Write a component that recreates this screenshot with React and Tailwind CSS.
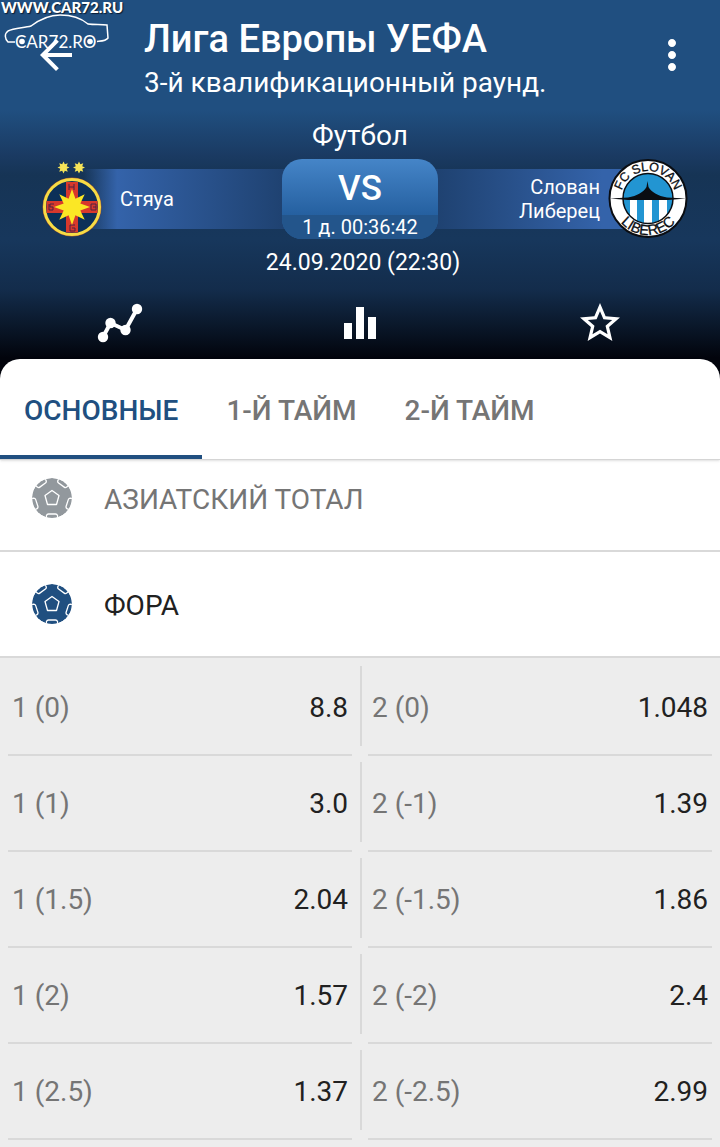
import React, { useState } from 'react'
import { MdArrowBack, MdMoreVert, MdEqualizer, MdStarBorder } from 'react-icons/md';

const tabs = ["ОСНОВНЫЕ", "1-Й ТАЙМ", "2-Й ТАЙМ"];

const odds = [
    [["1 (0)", "8.8"], ["2 (0)", "1.048"]],
    [["1 (1)", "3.0"], ["2 (-1)", "1.39"]],
    [["1 (1.5)", "2.04"], ["2 (-1.5)", "1.86"]],
    [["1 (2)", "1.57"], ["2 (-2)", "2.4"]],
    [["1 (2.5)", "1.37"], ["2 (-2.5)", "2.99"]],
];

// points of a star with n rays
function starPoints(cx, cy, outer, inner, n) {
    const points = [];
    for (let i = 0; i < n * 2; i++) {
        const r = i % 2 === 0 ? outer : inner;
        const a = (Math.PI * i) / n - Math.PI / 2;
        points.push(`${(cx + r * Math.cos(a)).toFixed(2)},${(cy + r * Math.sin(a)).toFixed(2)}`);
    }
    return points.join(" ");
}

function Watermark() {
    return (
        <div className="absolute left-0 top-0 z-20 pointer-events-none font-['Lato',sans-serif] text-white">
            <p className="pl-px text-[15px] leading-3.5 font-black [text-shadow:1px_1px_1px_#0b1d33]">WWW.CAR72.RU</p>
            <svg width="120" height="42" viewBox="0 14 120 42" fill="none" className="block">
                <path d="M15 42H8C5 39 4 34 8 31C14 28 24 28 31 26C39 20 48 15 60 15C73 15 81 18 88 24C95 25 101 24 107 25L108 38C106 41 102 41 97 41.500" stroke="#fff" strokeWidth="1.500" />
                <text x="15" y="48" fill="#fff" fontSize="17">CAR72.RO</text>
                <circle cx="22" cy="41.500" r="2.800" fill="#fff" />
                <circle cx="90" cy="41.500" r="2.800" fill="#fff" />
            </svg>
        </div>
    )
}

function SteauaCrest() {
    return (
        <svg viewBox="0 0 80 80" className="relative h-20 w-20 shrink-0">
            <polygon points={starPoints(31.5, 8.5, 6, 3.5, 8)} fill="#f6e458" />
            <polygon points={starPoints(47, 8.5, 6, 3.5, 8)} fill="#f6e458" />
            <circle cx="40" cy="48" r="29.500" fill="#a8552e" />
            <circle cx="40" cy="48" r="27.500" fill="#0c3058" stroke="#f6dc45" strokeWidth="3" />
            <path d="M34 23v19H14.500v12H34v19.500h12V54h19.500V42H46V23z" fill="#d8382c" />
            <g stroke="#4c2342" strokeWidth="1" fill="none">
                <path d="M37 25v6M37 28h5M42 25v6M43 66h-5v6h5v-3h-3M17 45v6h4v-3h-3v-3h4M59 45h5v6h-5zM61 48h3" />
            </g>
            <polygon points={starPoints(40, 48, 18, 9, 8)} fill="#fbe725" />
        </svg>
    )
}

function SlovanCrest() {
    return (
        <svg viewBox="0 0 80 80" className="relative h-20 w-20 shrink-0">
            <defs>
                <clipPath id="slovan-inner"><circle cx="40" cy="39.500" r="25" /></clipPath>
                <path id="slovan-top" d="M12.500 39.500A27.500 27.500 0 0 1 67.500 39.500" />
                <path id="slovan-bottom" d="M3.500 39.500A36.500 36.500 0 0 0 76.500 39.500" />
            </defs>
            <circle cx="40" cy="39.500" r="38.500" fill="#fff" stroke="#0a0d12" strokeWidth="2" />
            <g clipPath="url(#slovan-inner)">
                <path d="M14 14h52v26H14z" fill="#2295d2" />
                <path d="M14 40h8v26h-8zM29 40h7v26h-7zM44 40h7v26h-7zM59 40h8v26h-8z" fill="#2295d2" />
            </g>
            <circle cx="40" cy="39.500" r="25" fill="none" stroke="#0a0d12" strokeWidth="1.500" />
            <path d="M2 39.500L20 38.500C29 37 36 33 38.500 28L39.500 22L40.500 28C43 33 50 37 59 38.500L78 39.500L60 41H20z" fill="#0a0d12" />
            <g fill="#0a0d12" stroke="#0a0d12" strokeWidth="0.300" fontSize="12.500" textAnchor="middle" className="font-['Liberation_Sans',sans-serif]">
                <text><textPath href="#slovan-top" startOffset="50%">FC SLOVAN</textPath></text>
                <text fontSize="14.500"><textPath href="#slovan-bottom" startOffset="50%">LIBEREC</textPath></text>
            </g>
        </svg>
    )
}

function Ball({ active }) {
    return (
        <svg viewBox="0 0 40 40" className={`h-10 w-10 overflow-hidden rounded-full ${active ? "text-[#204f80]" : "text-[#92989d]"}`}>
            <circle cx="20" cy="20" r="20" fill="currentColor" />
            <g fill="none" stroke="#fff" strokeWidth="1.300" strokeLinejoin="round">
                <path d="M20 12.500L27 17.500L24.500 26.500H15.500L13 17.500z" />
                {[0, 72, 144, 216, 288].map((deg) => (
                    <path key={deg} d="M14 42L14.500 37.500Q15 36 16.500 36H23.500Q25 36 25.500 37.500L26 42" transform={`rotate(${deg} 20 20)`} />
                ))}
            </g>
        </svg>
    )
}

function Market({ title, active }) {
    return (
        <button className="w-full h-[106px] px-8 flex items-center gap-8 bg-white border-b-2 border-[#d9d9d9] cursor-pointer">
            <Ball active={active} />
            <span className={`pt-1 text-[28px] leading-8 ${active ? "text-[#212121]" : "text-[#757575]"}`}>{title}</span>
        </button>
    )
}

function Odd({ name, value }) {
    return (
        <button className="flex-1 h-24 px-1 pt-0.5 flex items-center justify-between border-b-2 border-[#d9d9d9] text-[28px] leading-8 cursor-pointer">
            <span className="text-[#757575]">{name}</span>
            <span className="text-[#212121]">{value}</span>
        </button>
    )
}

export default function App() {
    const [tab, setTab] = useState(0);

    return (
        <div className="relative min-h-screen bg-[#ededed] font-['Roboto',sans-serif]">
            <Watermark />
            <header className="-mb-6 pb-9 text-white bg-[linear-gradient(180deg,#204f80_0px,#204f80_110px,#1a3a62_156px,#163455_175px,#17375c_240px,#132c4b_290px,#091526_330px,#02040c_358px)]">
                <div className="h-[110px] pl-8 pr-6 flex items-center">
                    <button aria-label="Назад" className="cursor-pointer"><MdArrowBack size={48} /></button>
                    <div className="flex-1 pl-16 pt-2">
                        <h1 className="text-[38px] leading-12 font-medium">Лига Европы УЕФА</h1>
                        <p className="text-[28px] leading-10">3-й квалификационный раунд.</p>
                    </div>
                    <button aria-label="Меню" className="cursor-pointer"><MdMoreVert size={48} /></button>
                </div>
                <p className="pt-2.5 text-center text-[28px] leading-8">Футбол</p>
                <div className="mt-[7px] px-8 flex items-center">
                    <SteauaCrest />
                    <div className="-ml-10 -mr-4 h-[60px] flex-1 pl-12 flex items-center text-xl leading-6 bg-linear-to-r from-[#3463aa00] from-5% via-[#3463aa] via-20% to-[#1d3f6c]">Стяуа</div>
                    <div className="relative w-[156px] h-20 rounded-[20px] overflow-hidden flex flex-col text-center bg-linear-to-b from-[#4585c8] to-[#2560a0] to-70%">
                        <div className="h-14 pt-0.5 text-[35px] leading-14 font-medium">VS</div>
                        <div className="relative h-6 text-xl leading-6 bg-[#23558b]">1 д. 00:36:42</div>
                    </div>
                    <div className="-mr-10 -ml-4 h-[60px] flex-1 pr-12 flex items-center justify-end text-right text-xl leading-6 bg-linear-to-l from-[#3463aa] from-20% to-[#1d3f6c]">Слован<br />Либерец</div>
                    <SlovanCrest />
                </div>
                <p className="pt-2 pl-1.5 text-center text-[23px] leading-8">24.09.2020 (22:30)</p>
                <div className="pt-5 grid grid-cols-3 justify-items-center">
                    <button aria-label="График" className="cursor-pointer">
                        <svg viewBox="0 0 48 48" className="h-12 w-12" fill="currentColor">
                            <path d="M7 38L14.500 24L29.500 31L41 10" fill="none" stroke="currentColor" strokeWidth="4" />
                            <circle cx="7" cy="38" r="5.200" />
                            <circle cx="14.500" cy="24" r="5.200" />
                            <circle cx="29.500" cy="31" r="5.200" />
                            <circle cx="41" cy="10" r="5.200" />
                        </svg>
                    </button>
                    <button aria-label="Статистика" className="cursor-pointer"><MdEqualizer size={48} /></button>
                    <button aria-label="Избранное" className="cursor-pointer"><MdStarBorder size={48} /></button>
                </div>
            </header>
            <main>
                <nav className="relative z-10 h-[101px] flex bg-white rounded-t-[20px] border-b border-[#d5d5d5] shadow-sm">
                    {tabs.map((name, i) => (
                        <button
                            key={name}
                            onClick={() => setTab(i)}
                            className={`px-6 pt-2 text-[28px] leading-8 font-medium border-b-4 cursor-pointer ${tab === i ? "text-[#204f80] border-[#204f80]" : "text-[#757575] border-transparent"}`}
                        >
                            {name}
                        </button>
                    ))}
                </nav>
                <div className="-mt-3.5">
                    <Market title="АЗИАТСКИЙ ТОТАЛ" />
                    <Market title="ФОРА" active />
                </div>
                <div className="pt-0.5">
                    {odds.map(([home, away]) => (
                        <div key={home[0]} className="grid grid-cols-2">
                            <div className="px-2 flex">
                                <Odd name={home[0]} value={home[1]} />
                            </div>
                            <div className="pr-2 flex gap-1.5">
                                <div className="mt-1.5 h-20 w-0.5 bg-[#d9d9d9]"></div>
                                <Odd name={away[0]} value={away[1]} />
                            </div>
                        </div>
                    ))}
                </div>
            </main>
        </div>
    )
}
